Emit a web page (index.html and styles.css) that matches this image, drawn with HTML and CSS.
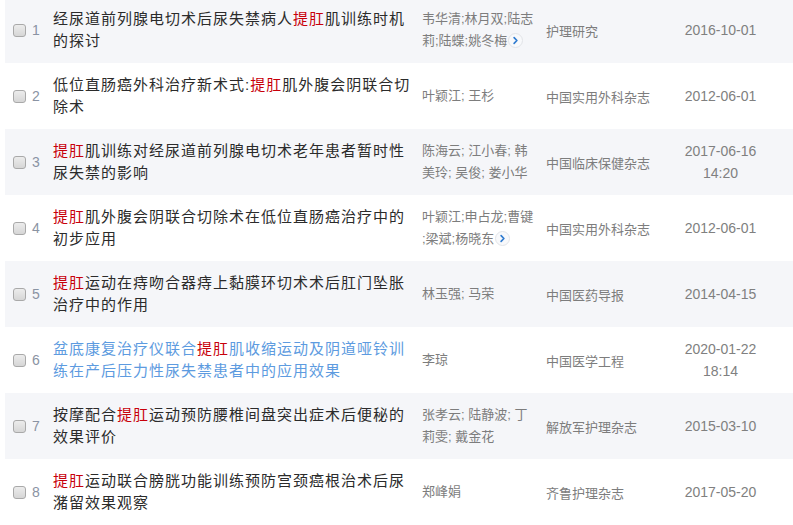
FILE: index.html
```html
<!DOCTYPE html>
<html lang="zh-CN">
<head>
    <meta charset="UTF-8">
    <title>文献列表</title>
    <link rel="stylesheet" href="styles.css">
</head>
<body>
    <div class="list">
        <div class="row">
            <input type="checkbox" class="chk">
            <span class="num">1</span>
            <div class="title">经尿道前列腺电切术后尿失禁病人<em class="hl">提肛</em>肌训练时机的探讨</div>
            <div class="authors">韦华清;林月双;陆志莉;陆蝶;姚冬梅<span class="more"><svg viewBox="0 0 14 14"><polyline points="5.5 4 8.5 7 5.5 10"></polyline></svg></span></div>
            <div class="source">护理研究</div>
            <div class="date">2016-10-01</div>
        </div>
        <div class="row">
            <input type="checkbox" class="chk">
            <span class="num">2</span>
            <div class="title">低位直肠癌外科治疗新术式:<em class="hl">提肛</em>肌外腹会阴联合切除术</div>
            <div class="authors">叶颖江; 王杉</div>
            <div class="source">中国实用外科杂志</div>
            <div class="date">2012-06-01</div>
        </div>
        <div class="row">
            <input type="checkbox" class="chk">
            <span class="num">3</span>
            <div class="title"><em class="hl">提肛</em>肌训练对经尿道前列腺电切术老年患者暂时性尿失禁的影响</div>
            <div class="authors">陈海云; 江小春; 韩美玲; 吴俊; 娄小华</div>
            <div class="source">中国临床保健杂志</div>
            <div class="date">2017-06-16<br>14:20</div>
        </div>
        <div class="row">
            <input type="checkbox" class="chk">
            <span class="num">4</span>
            <div class="title"><em class="hl">提肛</em>肌外腹会阴联合切除术在低位直肠癌治疗中的初步应用</div>
            <div class="authors">叶颖江;申占龙;曹键<br>;梁斌;杨晓东<span class="more"><svg viewBox="0 0 14 14"><polyline points="5.5 4 8.5 7 5.5 10"></polyline></svg></span></div>
            <div class="source">中国实用外科杂志</div>
            <div class="date">2012-06-01</div>
        </div>
        <div class="row">
            <input type="checkbox" class="chk">
            <span class="num">5</span>
            <div class="title"><em class="hl">提肛</em>运动在痔吻合器痔上黏膜环切术术后肛门坠胀治疗中的作用</div>
            <div class="authors">林玉强; 马荣</div>
            <div class="source">中国医药导报</div>
            <div class="date">2014-04-15</div>
        </div>
        <div class="row">
            <input type="checkbox" class="chk">
            <span class="num">6</span>
            <div class="title visited">盆底康复治疗仪联合<em class="hl">提肛</em>肌收缩运动及阴道哑铃训练在产后压力性尿失禁患者中的应用效果</div>
            <div class="authors">李琼</div>
            <div class="source">中国医学工程</div>
            <div class="date">2020-01-22<br>18:14</div>
        </div>
        <div class="row">
            <input type="checkbox" class="chk">
            <span class="num">7</span>
            <div class="title">按摩配合<em class="hl">提肛</em>运动预防腰椎间盘突出症术后便秘的效果评价</div>
            <div class="authors">张孝云; 陆静波; 丁莉雯; 戴金花</div>
            <div class="source">解放军护理杂志</div>
            <div class="date">2015-03-10</div>
        </div>
        <div class="row">
            <input type="checkbox" class="chk">
            <span class="num">8</span>
            <div class="title"><em class="hl">提肛</em>运动联合膀胱功能训练预防宫颈癌根治术后尿潴留效果观察</div>
            <div class="authors">郑峰娟</div>
            <div class="source">齐鲁护理杂志</div>
            <div class="date">2017-05-20</div>
        </div>
    </div>
</body>
</html>
```

FILE: styles.css
```css
/* General */
* {
    box-sizing: border-box;
    margin: 0;
    padding: 0;
}

body {
    font-family: "Liberation Sans", "Noto Sans CJK SC", sans-serif;
    background-color: #ffffff;
    color: #333333;
    overflow: hidden;
}

/* List */
.list {
    margin-top: -3px;
    padding-left: 5px;
}

.row {
    height: 66px;
    display: grid;
    grid-template-columns: 19px 21px 369px 124px 119px 111px 1fr;
    align-items: center;
    padding-left: 8px;
}

.row:nth-child(odd) {
    background-color: #f5f6f9;
}

/* Checkbox */
.chk {
    appearance: none;
    width: 13px;
    height: 13px;
    border: 1px solid #a9a9a9;
    border-radius: 3px;
    background: linear-gradient(#ececec, #d6d6d6);
}

.num {
    font-size: 14px;
    color: #8a93a3;
}

/* Title */
.title {
    width: 360px;
    font-size: 15px;
    line-height: 22px;
    letter-spacing: 1px;
    color: #2b2b2b;
}

.title.visited {
    color: #5d9be0;
}

.hl {
    font-style: normal;
    color: #c8000a;
}

/* Authors */
.authors {
    width: 116px;
    font-size: 13px;
    line-height: 22px;
    color: #7d7d7d;
}

.more {
    display: inline-block;
    width: 15px;
    height: 15px;
    margin-left: 1px;
    vertical-align: -3px;
    border: 1px solid #e2e4e8;
    border-radius: 50%;
    background-color: #f8f9fb;
}

.more svg {
    display: block;
    width: 13px;
    height: 13px;
    fill: none;
    stroke: #2f7bd0;
    stroke-width: 1.8;
    stroke-linecap: round;
    stroke-linejoin: round;
}

/* Source & date */
.source {
    font-size: 13px;
    color: #7d7d7d;
}

.date {
    font-size: 14px;
    line-height: 22px;
    text-align: center;
    color: #808080;
}
```
